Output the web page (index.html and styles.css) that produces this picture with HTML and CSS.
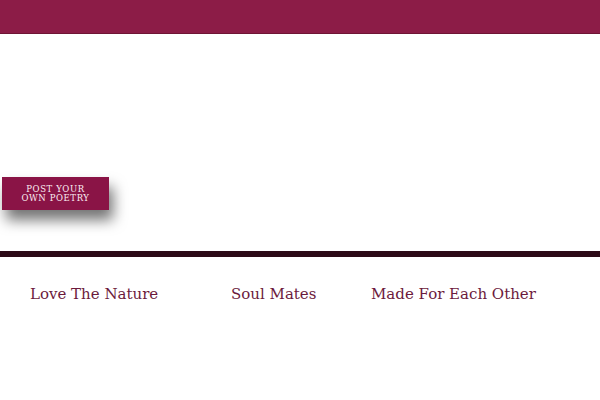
FILE: index.html
```html
<!DOCTYPE html>
<html>
<head>
<meta charset="utf-8">
<link rel="stylesheet" href="styles.css">
</head>
<body>
<header class="topbar"></header>
<main class="hero">
  <a class="post-btn" href="#">Post your<br>own poetry</a>
</main>
<div class="divider"></div>
<nav class="titles">
  <span class="title t1">Love The Nature</span>
  <span class="title t2">Soul Mates</span>
  <span class="title t3">Made For Each Other</span>
</nav>
</body>
</html>
```
FILE: styles.css
```css
html, body {
  margin: 0;
  padding: 0;
  background: #ffffff;
  font-family: "DejaVu Serif", serif;
}
.topbar {
  height: 33px;
  background: #8c1c47;
  border-bottom: 1px solid #6e1435;
}
.hero {
  height: 216px;
  padding-top: 143px;
  box-sizing: border-box;
  padding-left: 2px;
}
.post-btn {
  display: flex;
  align-items: center;
  justify-content: center;
  width: 107px;
  height: 33px;
  background: #8a1446;
  color: #fbeef3;
  text-decoration: none;
  text-transform: uppercase;
  text-align: center;
  font-size: 8.5px;
  line-height: 9px;
  letter-spacing: 0.6px;
  box-shadow: 4px 10px 14px rgba(0, 0, 0, 0.55);
}
.divider {
  margin-top: 1px;
  height: 6px;
  background: #2c0a17;
}
.titles {
  display: flex;
  padding-top: 28px;
  padding-left: 30px;
}
.title {
  font-size: 15px;
  line-height: 19px;
  color: #6c1a3c;
}
.t1 { width: 201px; }
.t2 { width: 140px; }
```
